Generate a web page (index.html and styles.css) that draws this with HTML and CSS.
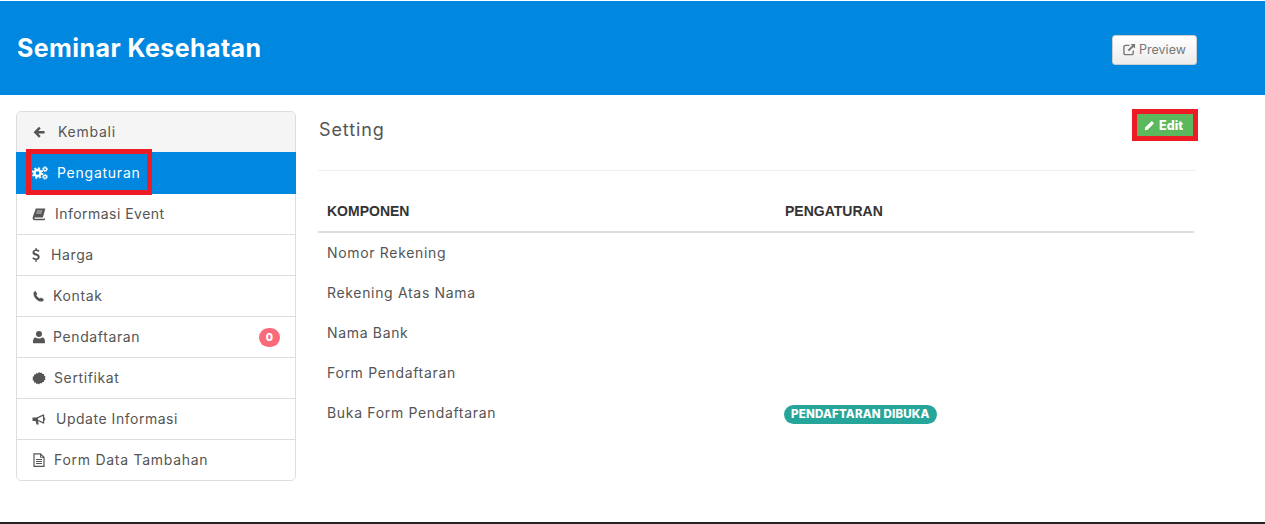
FILE: index.html
```html
<!DOCTYPE html>
<html lang="id">
<head>
<meta charset="utf-8">
<title>Seminar Kesehatan</title>
<link rel="stylesheet" href="styles.css">
</head>
<body>
<div class="page">
<header class="hero">
  <h1 class="hero-title">Seminar Kesehatan</h1>
  <a class="btn-preview">
    <svg class="ico-preview" viewBox="0 0 14 14"><path d="M11 8v3a1.500 1.500 0 0 1-1.500 1.500h-7A1.500 1.500 0 0 1 1 11V4a1.500 1.500 0 0 1 1.500-1.500H7" fill="none" stroke="currentColor" stroke-width="1.500"/><path d="M8 1h5v5l-1.800-1.800L6.500 9 5 7.500l4.800-4.700z" fill="currentColor"/></svg>
    Preview
  </a>
</header>
<div class="content">
  <nav class="side">
    <a class="item item-back"><svg class="ico ico-arrow" viewBox="0 0 14 14"><path d="M7 1l2 2-2.900 2.900H13.500v2.800H6.100L9 11.600l-2 2L.7 7.300z" fill="currentColor"/></svg><span class="lbl lbl-back">Kembali</span></a>
    <a class="item item-active"><svg class="ico ico-wide" viewBox="0 0 16 14"><circle cx="5.500" cy="7" r="3.100" fill="none" stroke="currentColor" stroke-width="2.500"/><circle cx="5.500" cy="7" r="4.900" fill="none" stroke="currentColor" stroke-width="1.800" stroke-dasharray="2 1.850"/><circle cx="13" cy="3.200" r="1.500" fill="none" stroke="currentColor" stroke-width="1.300"/><circle cx="13" cy="3.200" r="2.500" fill="none" stroke="currentColor" stroke-width="1" stroke-dasharray="1 .97"/><circle cx="13" cy="10.800" r="1.500" fill="none" stroke="currentColor" stroke-width="1.300"/><circle cx="13" cy="10.800" r="2.500" fill="none" stroke="currentColor" stroke-width="1" stroke-dasharray="1 .97"/></svg><span class="lbl lbl-gear">Pengaturan</span></a>
    <a class="item"><svg class="ico" viewBox="0 0 14 14"><path d="M3.800 1.500H13.400l-2.500 9H3c-.9 0-1 1.200 0 1.200h9.200l.7-1 .2 1.300-.7 1.200H2.500C1 13.200.3 11.600.7 10.200z" fill="currentColor"/><path d="M4.800 4h5.500M4.200 6h5.500" stroke="#fff" stroke-width=".7" fill="none"/></svg><span class="lbl lbl-book">Informasi Event</span></a>
    <a class="item"><svg class="ico ico-narrow" viewBox="0 0 8 14"><path d="M3.400 0h1.300v1.600c1.100.1 2 .4 2.800 1L6.700 4C5.900 3.500 5 3.100 4 3.100c-1 0-1.500.4-1.500 1 0 .7.600 1 2.100 1.500C6.600 6.300 7.700 7.100 7.700 8.900c0 1.600-1.200 2.800-3 3V14H3.400v-2.100C2.200 11.800 1.100 11.300.3 10.700l.9-1.500c.9.700 1.900 1.200 2.900 1.200 1 0 1.600-.5 1.600-1.200 0-.7-.6-1.100-2.200-1.600C1.500 7 .5 6.200.5 4.600c0-1.500 1.100-2.700 2.900-3z" fill="currentColor"/></svg><span class="lbl lbl-usd">Harga</span></a>
    <a class="item"><svg class="ico" viewBox="0 0 14 14"><path d="M3.500 2l1.800 2.900-1 1.200c.6 1.500 1.900 2.800 3.500 3.500l1.200-1 2.900 1.800c-.4 1.300-1.300 2.100-2.400 2.100C5.500 12.500 1.500 8.500 1.500 4.400 1.500 3.300 2.200 2.400 3.500 2z" fill="currentColor"/></svg><span class="lbl lbl-phone">Kontak</span></a>
    <a class="item"><svg class="ico" viewBox="0 0 14 14"><circle cx="7" cy="4" r="3"/><path d="M1.800 13.200c-.6 0-.8-.4-.8-1 0-2.800.8-4.800 2.600-4.800.9.700 2 1 3.400 1s2.500-.3 3.400-1c1.800 0 2.600 2 2.600 4.800 0 .6-.2 1-.8 1z"/></svg><span class="lbl lbl-user">Pendaftaran</span><span class="count">0</span></a>
    <a class="item"><svg class="ico" viewBox="0 0 14 14"><path d="M7 1l1.200 1 1.500-.5.700 1.400 1.600.2.100 1.600 1.400.8-.5 1.500.5 1.500-1.400.8-.1 1.600-1.600.2-.7 1.400-1.500-.5L7 13.500l-1.200-1-1.500.5-.7-1.400L2 11.400l-.1-1.600L.5 9 1 7.500.5 6l1.400-.8L2 3.600l1.600-.2.700-1.400 1.500.5z" fill="currentColor"/></svg><span class="lbl lbl-cert">Sertifikat</span></a>
    <a class="item"><svg class="ico ico-wide" viewBox="0 0 16 14"><path d="M.5 5.500h4L11 2.500h1.200v9H11l-5-2.500.8 3.500H4.500L3.500 9H.5z" fill="currentColor"/><path d="M11 4L6 6.200v1.600l5 2.200z" fill="#fff"/><path d="M12.200 5.200a2 2 0 0 1 0 3.600z" fill="currentColor"/></svg><span class="lbl lbl-bull">Update Informasi</span></a>
    <a class="item"><svg class="ico" viewBox="0 0 14 14"><path d="M2 .8h6.500L12 4.300v9H2z" fill="none" stroke="currentColor" stroke-width="1.200"/><path d="M8.500 1v3.300H12M4 6.500h6M4 8.500h6M4 10.500h6" fill="none" stroke="currentColor" stroke-width="1"/></svg><span class="lbl lbl-file">Form Data Tambahan</span></a>
  </nav>
  <main class="main">
    <div class="main-head">
      <h2 class="main-title">Setting</h2>
      <a class="btn-edit"><svg class="ico-edit" viewBox="0 0 12 12"><path d="M8.500 1l2.500 2.500L4 10.500.8 11.200 1.500 8z" fill="currentColor"/></svg>Edit</a>
    </div>
    <table class="tbl">
      <thead><tr><th class="col-a">KOMPONEN</th><th>PENGATURAN</th></tr></thead>
      <tbody>
        <tr><td>Nomor Rekening</td><td></td></tr>
        <tr><td>Rekening Atas Nama</td><td></td></tr>
        <tr><td>Nama Bank</td><td></td></tr>
        <tr><td>Form Pendaftaran</td><td></td></tr>
        <tr><td>Buka Form Pendaftaran</td><td><span class="pill">PENDAFTARAN DIBUKA</span></td></tr>
      </tbody>
    </table>
  </main>
</div>
<div class="mark mark-nav"></div>
<div class="mark mark-edit"></div>
<div class="footer-line"></div>
</div>
</body>
</html>
```
FILE: styles.css
```css
* { box-sizing: border-box; }
html, body { margin: 0; padding: 0; background: #fff; }
body { font-family: "Inter", "Liberation Sans", sans-serif; color: #555; height: 524px; overflow: hidden; }
.page { position: relative; height: 524px; padding-top: 1px; display: flex; flex-direction: column; }
.hero { height: 94px; background: #0087e0; padding: 0 68px 0 17px; display: flex; align-items: center; justify-content: space-between; flex: none; }
.hero-title { margin: 0; color: #fff; font-size: 25px; font-weight: 700; line-height: 28px; letter-spacing: .43px; }
.btn-preview { width: 85px; height: 30px; margin-top: 4px; padding-bottom: 2px; border: 1px solid #ccc; border-radius: 3px; background: linear-gradient(#fff, #ececec); color: #777; font-size: 12.500px; display: flex; align-items: center; justify-content: center; gap: 3px; }
.ico-preview { width: 13px; height: 13px; }
.content { display: flex; flex: 1; padding: 16px 69px 0 16px; gap: 22px; }
.side { width: 280px; height: 370px; border: 1px solid #ddd; border-radius: 5px; flex: none; display: flex; flex-direction: column; }
.item { height: 41px; padding: 0 15px; display: flex; align-items: center; border-bottom: 1px solid #ddd; font-size: 14px; color: #555; flex: none; }
.item:last-child { border-bottom: 0; height: 40px; }
.item-back { background: #f5f5f5; border-bottom: 0; border-radius: 4px 4px 0 0; height: 40px; }
.item-active { background: #0087e0; color: #fff; height: 42px; margin: 0 -1px; padding: 0 16px; border-bottom: 0; }
.ico { width: 14px; height: 14px; flex: none; fill: currentColor; }
.ico-arrow { width: 12px; height: 12px; margin-left: 1px; }
.ico-narrow { width: 8px; }
.ico-wide { width: 16px; }
.lbl { letter-spacing: .62px; margin-top: -2px; }
.lbl-back { margin-left: 13px; letter-spacing: .75px; }
.lbl-gear { margin-left: 9px; color: #fff; letter-spacing: .75px; }
.lbl-book { margin-left: 9px; letter-spacing: .47px; }
.lbl-usd { margin-left: 11px; }
.lbl-phone { margin-left: 7px; }
.lbl-user { margin-left: 7px; }
.lbl-cert { margin-left: 8px; }
.lbl-bull { margin-left: 8px; letter-spacing: .52px; }
.lbl-file { margin-left: 8px; letter-spacing: .72px; }
.count { margin-left: auto; background: #f96b7a; color: #fff; font-size: 10.500px; font-weight: 800; width: 21px; height: 19px; border-radius: 10px; display: flex; align-items: center; justify-content: center; }
.main { flex: 1; min-width: 0; }
.main-head { height: 60px; border-bottom: 1px solid #eee; display: flex; justify-content: space-between; align-items: flex-start; }
.main-title { margin: 8px 0 0 1px; font-size: 18px; line-height: 22px; font-weight: 400; color: #555; letter-spacing: .9px; }
.btn-edit { margin: 3px 3px 0 0; width: 56px; height: 22px; padding-right: 3px; background: #5cb85c; color: #fff; font-size: 12.500px; font-weight: 800; display: flex; align-items: center; justify-content: center; gap: 4px; }
.ico-edit { width: 11px; height: 11px; }
.tbl { width: 876px; margin-top: 19px; border-collapse: collapse; }
.tbl th { height: 42px; padding: 0 9px; text-align: left; font-family: "Liberation Sans", sans-serif; font-size: 14px; font-weight: 700; color: #333; border-bottom: 2px solid #ddd; }
.col-a { width: 458px; }
.tbl td { height: 40px; padding: 0 9px; font-size: 14px; color: #555; letter-spacing: .67px; }
.pill { display: inline-block; background: #26a69a; color: #fff; font-size: 11.500px; font-weight: 800; line-height: 19px; height: 19px; border-radius: 10px; padding: 0 7px; margin: 4px 0 0 -1px; letter-spacing: .2px; vertical-align: middle; }
.mark { position: absolute; border: 5px solid #ed1c24; }
.mark-nav { left: 26px; top: 149px; width: 126px; height: 46px; }
.mark-edit { left: 1132px; top: 109px; width: 66px; height: 32px; }
.footer-line { position: absolute; left: 0; right: 0; top: 522px; height: 2px; background: #222; }
```
